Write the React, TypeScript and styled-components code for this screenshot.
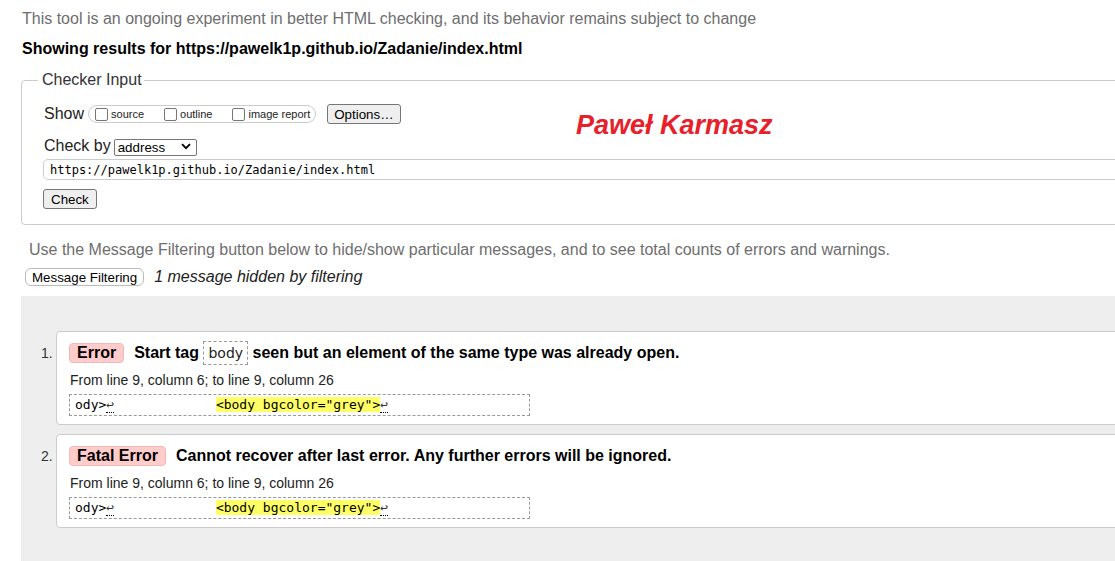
import React from "react";
import styled, { createGlobalStyle } from "styled-components";

const GlobalStyle = createGlobalStyle`
  html, body { margin: 0; padding: 0; background: #fff; overflow: hidden; }
  body { font-family: "Liberation Sans", Arial, sans-serif; color: #111; }
  * { box-sizing: border-box; }
`;

const Page = styled.div`
  width: 1260px;
  padding: 10px 0 0 21px;
`;

const Intro = styled.p`
  margin: 0 0 0 1px;
  font-size: 16px;
  line-height: 18px;
  color: #6e6e6e;
`;

const Heading = styled.h2`
  margin: 12px 0 0 1px;
  font-size: 16px;
  line-height: 18px;
  font-weight: bold;
  color: #000;
`;

const Fieldset = styled.fieldset`
  margin: 13px 0 0 0;
  border: 1px solid #ccc;
  border-radius: 4px;
  padding: 15px 0 15px 21px;
  min-width: 0;
`;

const Legend = styled.legend`
  font-size: 16px;
  line-height: 18px;
  color: #333;
  padding: 0 2px 0 4px;
  margin-left: -5px;
`;

const FormBody = styled.div`
  position: relative;
  display: flex;
  flex-direction: column;
  align-items: flex-start;
`;

const Row = styled.div<{ $gap?: number; $mt?: number }>`
  display: flex;
  align-items: center;
  gap: ${(p) => p.$gap ?? 4}px;
  margin-top: ${(p) => p.$mt ?? 0}px;
`;

const Label = styled.span`
  font-size: 16px;
  line-height: 18px;
  color: #222;
  padding-left: 1px;
`;

const CheckGroup = styled.span`
  display: inline-flex;
  align-items: center;
  height: 18px;
  border: 1px solid #ccc;
  border-radius: 9px;
  padding: 0 5px 0 6px;
  gap: 20px;
`;

const CheckItem = styled.label`
  display: inline-flex;
  align-items: center;
  gap: 3px;
  font-size: 11px;
  line-height: 13px;
  padding-top: 1px;
  color: #222;
`;

const Box = styled.input`
  appearance: none;
  margin: 0 0 1px 0;
  width: 13px;
  height: 13px;
  border: 1px solid #767676;
  border-radius: 2px;
  background: #fff;
`;

const Button = styled.button`
  font-family: "Liberation Sans", Arial, sans-serif;
  font-size: 13.33px;
  color: #000;
  background: #efefef;
  border: 1px solid #767676;
  border-radius: 3px;
  height: 20px;
  padding: 0 7px;
  margin: 0;
`;

const OptionsButton = styled(Button)`
  margin-left: 7px;
  padding: 0 6px;
`;

const SelectWrap = styled.span`
  position: relative;
  display: inline-block;
  width: 83px;
  height: 17px;
`;

const Select = styled.select`
  appearance: none;
  width: 100%;
  height: 100%;
  margin: 0;
  border: 1px solid #767676;
  border-radius: 2px;
  background: #fff;
  font-family: "Liberation Sans", Arial, sans-serif;
  font-size: 13.33px;
  color: #000;
  padding: 0 0 0 3px;
`;

const Chevron = styled.svg`
  position: absolute;
  right: 6px;
  top: 5px;
  pointer-events: none;
`;

const UrlInput = styled.input`
  margin-top: 4px;
  width: 1180px;
  height: 21px;
  border: 1px solid #ccc;
  border-radius: 5px;
  padding: 0 6px;
  font-family: "DejaVu Sans Mono", monospace;
  font-size: 12px;
  color: #000;
  background: #fff;
`;

const CheckButton = styled(Button)`
  margin-top: 9px;
`;

const Signature = styled.div`
  position: absolute;
  left: 533px;
  top: 6px;
  font-size: 27px;
  line-height: 31px;
  font-weight: bold;
  font-style: italic;
  color: #e8202a;
`;

const FilterNote = styled.p`
  margin: 16px 0 0 8px;
  font-size: 16px;
  line-height: 18px;
  color: #6e6e6e;
`;

const FilterRow = styled.div`
  display: flex;
  align-items: center;
  gap: 10px;
  margin: 9px 0 0 4px;
`;

const FilterButton = styled.button`
  font-family: "Liberation Sans", Arial, sans-serif;
  font-size: 13.33px;
  color: #000;
  background: #fff;
  border: 1px solid #bbb;
  border-radius: 6px;
  height: 18px;
  padding: 0 6px;
  margin: 0;
`;

const HiddenNote = styled.span`
  font-size: 16px;
  line-height: 18px;
  font-style: italic;
  color: #222;
`;

const Results = styled.ol`
  list-style: none;
  margin: 10px 0 0 0;
  padding: 35px 0 60px 20px;
  background: #eee;
  display: flex;
  flex-direction: column;
  gap: 9px;
`;

const Item = styled.li`
  display: flex;
  align-items: flex-start;
`;

const Num = styled.span`
  width: 15px;
  flex: none;
  font-size: 14px;
  line-height: 24px;
  padding-top: 10px;
  color: #333;
`;

const Card = styled.div`
  flex: 1;
  background: #fff;
  border: 1px solid #ccc;
  border-radius: 4px;
  padding: 9px 12px 8px 12px;
`;

const Title = styled.div`
  display: flex;
  align-items: center;
  gap: 10px;
  height: 24px;
`;

const Badge = styled.span`
  display: inline-block;
  height: 20px;
  line-height: 18px;
  padding: 0 7px;
  background: #fcc;
  border: 1px solid #f2b9b6;
  border-radius: 4px;
  font-size: 16px;
  font-weight: bold;
  color: #000;
`;

const TitleText = styled.span`
  font-size: 16px;
  line-height: 24px;
  font-weight: bold;
  color: #000;
`;

const Code = styled.code`
  display: inline-block;
  height: 24px;
  line-height: 22px;
  vertical-align: middle;
  padding: 0 4px;
  border: 1px dashed #999;
  font-family: "DejaVu Sans", sans-serif;
  font-size: 14px;
  font-weight: normal;
  color: #222;
`;

const Location = styled.p`
  margin: 6px 0 0 1px;
  font-size: 14px;
  line-height: 18px;
  color: #222;
`;

const Extract = styled.div`
  margin-top: 5px;
  width: 461px;
  height: 22px;
  border: 1px dashed #999;
  padding: 0 5px;
  font-family: "DejaVu Sans Mono", monospace;
  font-size: 13px;
  line-height: 20px;
  white-space: pre;
  color: #000;
`;

const Mark = styled.mark`
  background: #ffff66;
  color: inherit;
`;

const Lf = styled.span`
  color: #333;
  border-bottom: 1px dotted #000;
`;

type Msg = {
  type: string;
  title: React.ReactNode;
};

const messages: Msg[] = [
  {
    type: "Error",
    title: (
      <>
        Start tag <Code>body</Code> seen but an element of the same type was already open.
      </>
    ),
  },
  {
    type: "Fatal Error",
    title: <>Cannot recover after last error. Any further errors will be ignored.</>,
  },
];

export default function App() {
  return (
    <>
      <GlobalStyle />
      <Page>
        <Intro>
          This tool is an ongoing experiment in better HTML checking, and its behavior remains subject to change
        </Intro>
        <Heading>Showing results for https://pawelk1p.github.io/Zadanie/index.html</Heading>

        <Fieldset>
          <Legend>Checker Input</Legend>
          <FormBody>
            <Row $gap={4}>
              <Label>Show</Label>
              <CheckGroup>
                <CheckItem>
                  <Box type="checkbox" />
                  source
                </CheckItem>
                <CheckItem>
                  <Box type="checkbox" />
                  outline
                </CheckItem>
                <CheckItem>
                  <Box type="checkbox" />
                  image report
                </CheckItem>
              </CheckGroup>
              <OptionsButton type="button">Options…</OptionsButton>
            </Row>
            <Row $gap={3} $mt={13}>
              <Label>Check by</Label>
              <SelectWrap>
                <Select defaultValue="address">
                  <option value="address">address</option>
                  <option value="file">file upload</option>
                  <option value="text">text input</option>
                </Select>
                <Chevron width="10" height="7" viewBox="0 0 10 7">
                  <path d="M1 1.2 L5 5.2 L9 1.2" fill="none" stroke="#000" strokeWidth="1.8" />
                </Chevron>
              </SelectWrap>
            </Row>
            <UrlInput readOnly value="https://pawelk1p.github.io/Zadanie/index.html" />
            <CheckButton type="button">Check</CheckButton>
            <Signature>Paweł Karmasz</Signature>
          </FormBody>
        </Fieldset>

        <FilterNote>
          Use the Message Filtering button below to hide/show particular messages, and to see total counts of errors and warnings.
        </FilterNote>
        <FilterRow>
          <FilterButton type="button">Message Filtering</FilterButton>
          <HiddenNote>1 message hidden by filtering</HiddenNote>
        </FilterRow>

        <Results>
          {messages.map((m, i) => (
            <Item key={i}>
              <Num>{i + 1}.</Num>
              <Card>
                <Title>
                  <Badge>{m.type}</Badge>
                  <TitleText>{m.title}</TitleText>
                </Title>
                <Location>From line 9, column 6; to line 9, column 26</Location>
                <Extract>
                  ody&gt;<Lf>↩</Lf>{"             "}
                  <Mark>&lt;body bgcolor="grey"&gt;</Mark>
                  <Lf>↩</Lf>
                </Extract>
              </Card>
            </Item>
          ))}
        </Results>
      </Page>
    </>
  );
}
